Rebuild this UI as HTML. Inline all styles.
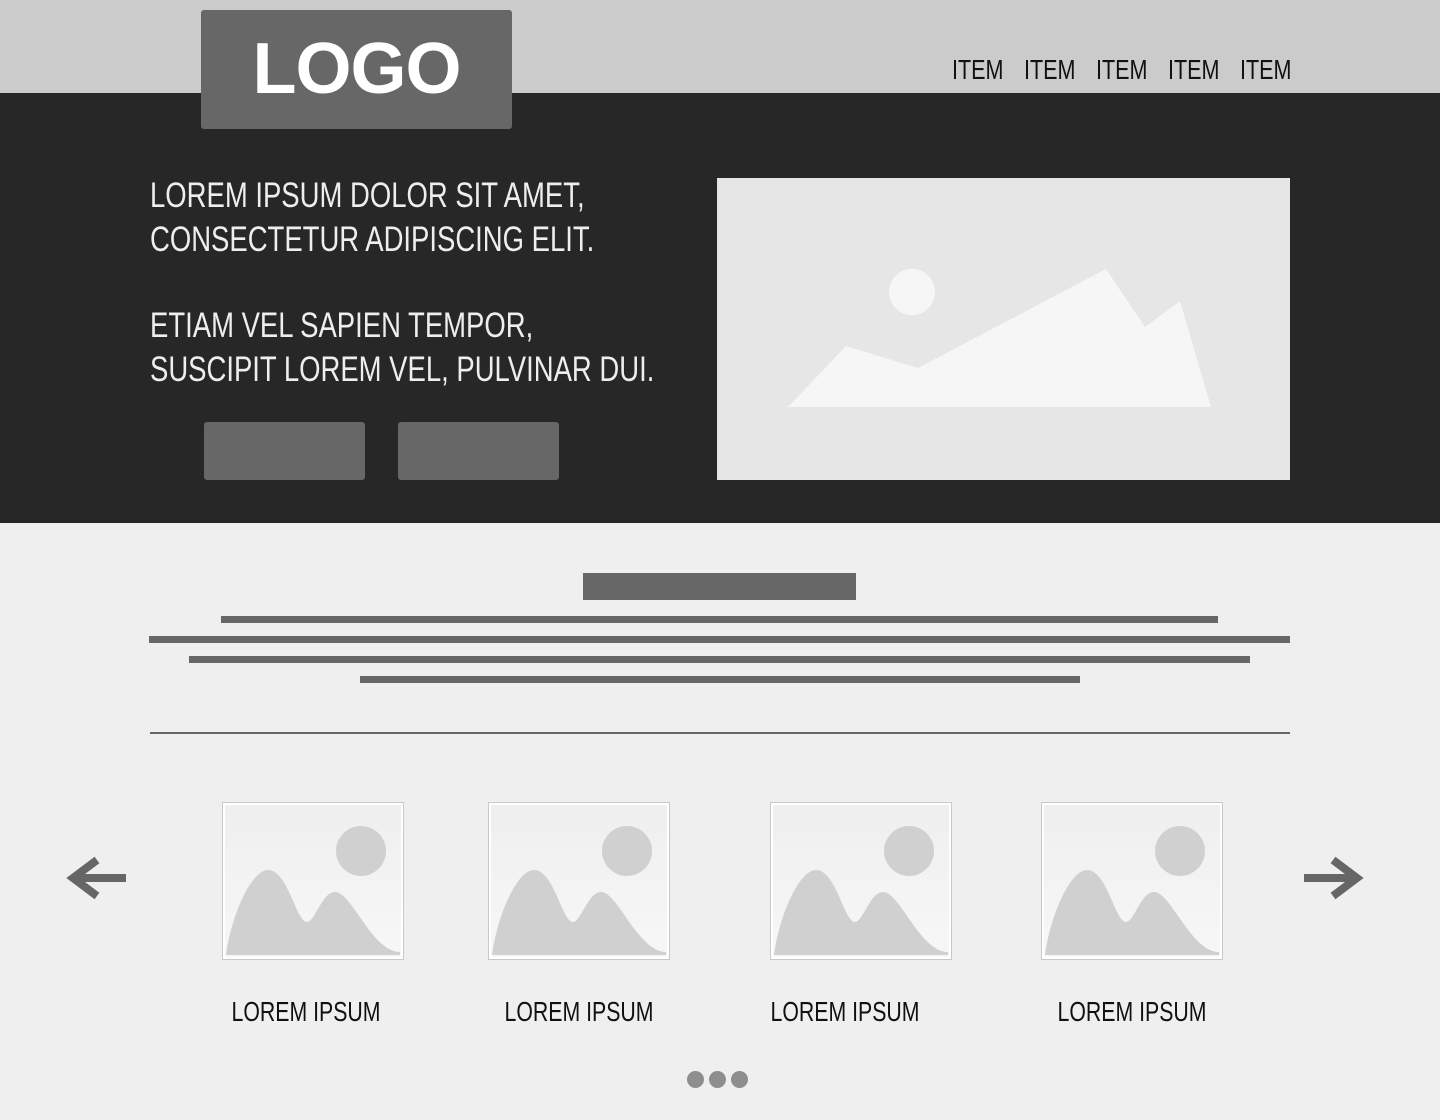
<!DOCTYPE html>
<html><head><style>
*{margin:0;padding:0;box-sizing:border-box}
body{width:1440px;height:1120px;background:#efefef;position:relative;overflow:hidden;font-family:"Liberation Sans",sans-serif}
.a{position:absolute}
.top{left:0;top:0;width:1440px;height:93px;background:#cbcbcb}
.hero{left:0;top:93px;width:1440px;height:430px;background:#272727}
.logo{left:201px;top:10px;width:311px;height:119px;background:#676767;border-radius:3px;color:#fff;font-weight:bold;font-size:72px;text-align:center;line-height:119px;letter-spacing:-1px}
.nav{top:54px;font-size:28px;color:#111;transform:scaleX(0.77);transform-origin:0 0}
.ht{left:150px;color:#eee;font-size:35px;line-height:44px;transform:scaleX(0.785);transform-origin:0 0;white-space:nowrap}
.btn{top:422px;width:161px;height:58px;background:#676767;border-radius:3px}
.bar{background:#676767;height:7px}
.cap{top:996px;font-size:28px;color:#111;width:220px;text-align:center;transform:scaleX(0.76);transform-origin:50% 0;white-space:nowrap}
.dot{top:1071px;width:17px;height:17px;border-radius:50%;background:#8e8e8e}
</style></head><body>
<div class="a top"></div>
<div class="a hero"></div>
<div class="a logo">LOGO</div>
<div class="a nav" style="left:952px">ITEM</div>
<div class="a nav" style="left:1024px">ITEM</div>
<div class="a nav" style="left:1096px">ITEM</div>
<div class="a nav" style="left:1168px">ITEM</div>
<div class="a nav" style="left:1240px">ITEM</div>
<div class="a ht" style="top:174px">LOREM IPSUM DOLOR SIT AMET,<br>CONSECTETUR ADIPISCING ELIT.</div>
<div class="a ht" style="top:304px">ETIAM VEL SAPIEN TEMPOR,<br>SUSCIPIT LOREM VEL, PULVINAR DUI.</div>
<div class="a btn" style="left:204px"></div>
<div class="a btn" style="left:398px"></div>
<svg class="a" style="left:717px;top:178px" width="573" height="302"><rect width="573" height="302" fill="#e6e6e6"/><circle cx="195" cy="114" r="23" fill="#f6f6f6"/><polygon points="71,229 129,168 201,190 389,91 428,149 463,123 494,229" fill="#f6f6f6"/></svg>
<div class="a" style="left:583px;top:573px;width:273px;height:27px;background:#676767"></div>
<div class="a bar" style="left:221px;top:616px;width:997px"></div>
<div class="a bar" style="left:149px;top:636px;width:1141px"></div>
<div class="a bar" style="left:189px;top:656px;width:1061px"></div>
<div class="a bar" style="left:360px;top:676px;width:720px"></div>
<div class="a" style="left:150px;top:732px;width:1140px;height:2px;background:#676767"></div>
<svg class="a" style="left:0;top:0" width="1440" height="1120">
<defs><linearGradient id="g" x1="0" y1="0" x2="0" y2="1"><stop offset="0" stop-color="#efefef"/><stop offset="1" stop-color="#f7f7f7"/></linearGradient>
<g id="t"><rect x="0.5" y="0.5" width="181" height="157" fill="#fff" stroke="#c8c8c8"/><rect x="3" y="3" width="176" height="152" fill="url(#g)"/><circle cx="139" cy="49" r="25" fill="#d0d0d0"/><path d="M4,153 C10,110 30,68 46,68 C66,68 74,120 85,120 C93,120 100,90 113,90 C130,90 150,150 178,150 L178,153 Z" fill="#d0d0d0"/></g></defs>
<use href="#t" x="222" y="802"/><use href="#t" x="488" y="802"/><use href="#t" x="770" y="802"/><use href="#t" x="1041" y="802"/>
<path d="M126,878 H78 M97,860 L73,878 L97,896" stroke="#666" stroke-width="8" fill="none"/>
<path d="M1304,878 H1352 M1333,860 L1357,878 L1333,896" stroke="#666" stroke-width="8" fill="none"/>
</svg>
<div class="a cap" style="left:196px">LOREM IPSUM</div>
<div class="a cap" style="left:469px">LOREM IPSUM</div>
<div class="a cap" style="left:735px">LOREM IPSUM</div>
<div class="a cap" style="left:1022px">LOREM IPSUM</div>
<div class="a dot" style="left:687px"></div>
<div class="a dot" style="left:709px"></div>
<div class="a dot" style="left:731px"></div>
</body></html>
